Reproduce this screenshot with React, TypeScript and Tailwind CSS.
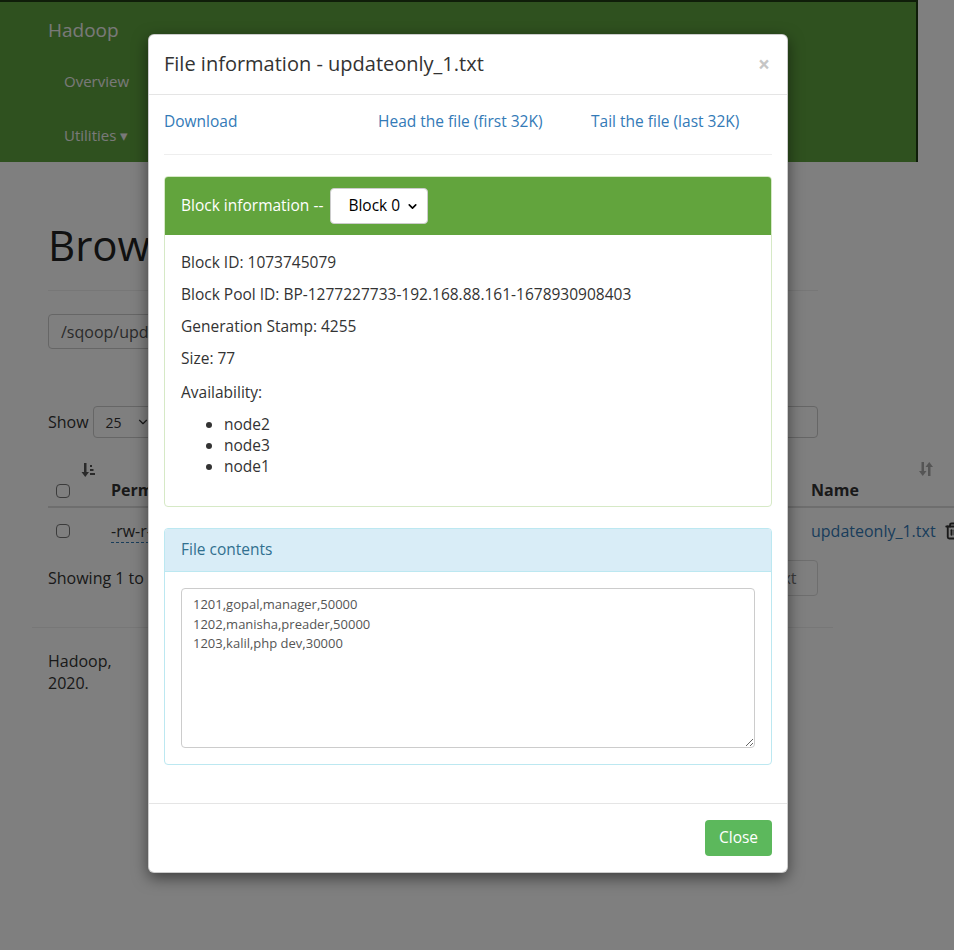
import { ChevronDown, Trash2 } from "lucide-react";

const font = { fontFamily: '"Open Sans", "Noto Sans", sans-serif' };

function SortIcon() {
  return (
    <svg width="16" height="16" viewBox="0 0 16 16" className="fill-[#555]">
      <rect x="4" y="1" width="2.5" height="10" />
      <polygon points="1.5,10 9,10 5.25,15" />
      <rect x="10" y="3" width="2" height="2" />
      <rect x="10" y="7" width="3.5" height="2" />
      <rect x="10" y="11" width="5" height="2" />
    </svg>
  );
}

function BothSort() {
  return (
    <svg width="16" height="16" viewBox="0 0 16 16" className="fill-[#aaa]">
      <rect x="3.5" y="1" width="2.5" height="10" />
      <polygon points="1,10 8.5,10 4.75,15" />
      <rect x="10" y="5" width="2.5" height="10" />
      <polygon points="7.5,6 15,6 11.25,1" />
    </svg>
  );
}

function Checkbox() {
  return <div className="h-[14px] w-[14px] rounded-sm border border-[#777]" />;
}

function Background() {
  return (
    <div className="h-[950px] w-[954px] overflow-hidden bg-white text-[#333]" style={font}>
      <div className="h-[162px] w-[918px] border-t-2 border-r-2 border-[#1f3a12] bg-[#5fa33e]">
        <div className="pl-12 pt-[14px] text-[19px] text-[#f2f2f2]">Hadoop</div>
        <div className="pl-16 pt-[25px] text-[15px] text-[#f2f2f2]">Overview</div>
        <div className="pl-16 pt-[32px] text-[15px] text-[#f2f2f2]">Utilities ▾</div>
      </div>
      <div className="w-[1000px] pl-12">
        <h1 className="pt-[62px] text-[42px] leading-none text-[#222]">Browse Directory</h1>
        <div className="mt-[24px] w-[770px] border-t border-[#eee]" />
        <div className="mt-[23px] flex h-[35px] w-[400px] items-center rounded border border-[#ccc] px-3 text-[16px] text-[#555]">
          /sqoop/updateonly_1.txt
        </div>
        <div className="mt-[57px] flex w-[770px] items-center justify-between">
          <div className="flex items-center gap-1 text-[16px]">
            Show
            <div className="flex h-[32px] w-[70px] items-center justify-between rounded border border-[#ccc] px-3 text-[14px]">
              25 <ChevronDown size={14} />
            </div>
            entries
          </div>
          <div className="h-[32px] w-[180px] rounded border border-[#ccc]" />
        </div>

        <div className="mt-[23px] w-[906px] text-[16px]">
          <div className="flex items-end border-b-2 border-[#ddd] pb-[4px]">
            <div className="flex w-[63px] flex-col items-start gap-[6px] pl-[8px]">
              <div className="pl-[24px]"><SortIcon /></div>
              <div className="mb-[4px]"><Checkbox /></div>
            </div>
            <div className="flex-1 font-bold">Permission</div>
            <div className="flex w-[100px] justify-end pb-[24px] pr-[36px]"><BothSort /></div>
            <div className="flex w-[143px] flex-col gap-[1px]">
              <div className="flex justify-end pr-[20px]"><BothSort /></div>
              <span className="font-bold">Name</span>
            </div>
          </div>
          <div className="flex h-[46px] items-center">
            <div className="w-[63px] pl-[8px]"><Checkbox /></div>
            <div className="flex-1">
              <span className="border-b border-dashed border-[#337ab7]">-rw-r--r--</span>
            </div>
            <div className="flex w-[143px] items-center gap-[8px]">
              <span className="shrink-0 text-[#337ab7]">updateonly_1.txt</span>
              <Trash2 size={18} strokeWidth={2.5} className="shrink-0" />
            </div>
          </div>
          <div className="mt-[6px] flex w-[770px] items-center justify-between">
            <span>Showing 1 to 1 of 1 entries</span>
            <div className="flex h-[36px] w-[78px] items-center justify-center rounded border border-[#ddd] text-[#777]">Next</div>
          </div>
        </div>
      </div>
      <div className="ml-[32px] mt-[31px] w-[801px] border-t border-[#eee]" />
      <p className="pl-12 pt-[22px] text-[16px] leading-[22px]">
        Hadoop,
        <br />
        2020.
      </p>
    </div>
  );
}

export default function App() {
  return (
    <div className="relative h-[950px] w-[954px] overflow-hidden">
      <Background />
      <div className="absolute inset-0 bg-black/50" />
      <div
        className="absolute left-[148px] top-[34px] w-[640px] rounded-md border border-black/20 bg-white text-[#333] shadow-[0_5px_15px_rgba(0,0,0,0.5)]"
        style={font}
      >
        <div className="flex items-center justify-between border-b border-[#e5e5e5] px-[15px] pb-[16px] pt-[15px]">
          <h4 className="text-[20px] leading-[28px] text-[#333]">File information - updateonly_1.txt</h4>
          <span className="mr-[2px] text-[21px] font-bold leading-none text-[#c6c6c6]">×</span>
        </div>
        <div className="px-[15px] pt-[15px]">
          <div className="flex text-[15.5px] leading-[22px] text-[#337ab7]">
            <a className="w-[214px]">Download</a>
            <a className="w-[213px]">Head the file (first 32K)</a>
            <a>Tail the file (last 32K)</a>
          </div>
          <div className="mt-[22px] border-t border-[#eee]" />

          <div className="mt-[21px] rounded border border-[#d6e9c6]">
            <div className="flex h-[58px] items-center rounded-t-[3px] bg-[#62a43d] px-[16px] text-[15.5px] text-white">
              <span>Block information --</span>
              <div className="ml-[7px] flex h-[36px] w-[98px] items-center justify-between rounded border border-[#ccc] bg-white pl-[17px] pr-[8px] text-[15.5px] text-black">
                Block 0 <ChevronDown size={13} strokeWidth={3} />
              </div>
            </div>
            <div className="px-[16px] pb-[19px] pt-[16px] text-[15.5px] leading-[22px]">
              <p>Block ID: 1073745079</p>
              <p className="mt-[10px]">Block Pool ID: BP-1277227733-192.168.88.161-1678930908403</p>
              <p className="mt-[10px]">Generation Stamp: 4255</p>
              <p className="mt-[10px]">Size: 77</p>
              <p className="mt-[12px]">Availability:</p>
              <ul className="mb-[10px] mt-[11px] list-disc pl-[43px] leading-[21px]">
                <li>node2</li>
                <li>node3</li>
                <li>node1</li>
              </ul>
            </div>
          </div>

          <div className="mt-[21px] rounded border border-[#bce8f1]">
            <div className="flex h-[43px] items-center rounded-t-[3px] border-b border-[#bce8f1] bg-[#d9edf7] px-[16px] text-[15.5px] text-[#31708f]">
              File contents
            </div>
            <div className="p-[16px]">
              <textarea
                readOnly
                className="block h-[160px] w-full resize-y rounded border border-[#ccc] px-[11px] py-[6px] text-[13px] leading-[19.5px] text-[#555]"
                style={font}
                defaultValue={"1201,gopal,manager,50000\n1202,manisha,preader,50000\n1203,kalil,php dev,30000"}
              />
            </div>
          </div>
        </div>
        <div className="mt-[38px] flex justify-end border-t border-[#e5e5e5] px-[15px] py-[16px]">
          <button className="h-[36px] w-[67px] rounded bg-[#5cb85c] text-[15.5px] text-white" style={font}>
            Close
          </button>
        </div>
      </div>
    </div>
  );
}
